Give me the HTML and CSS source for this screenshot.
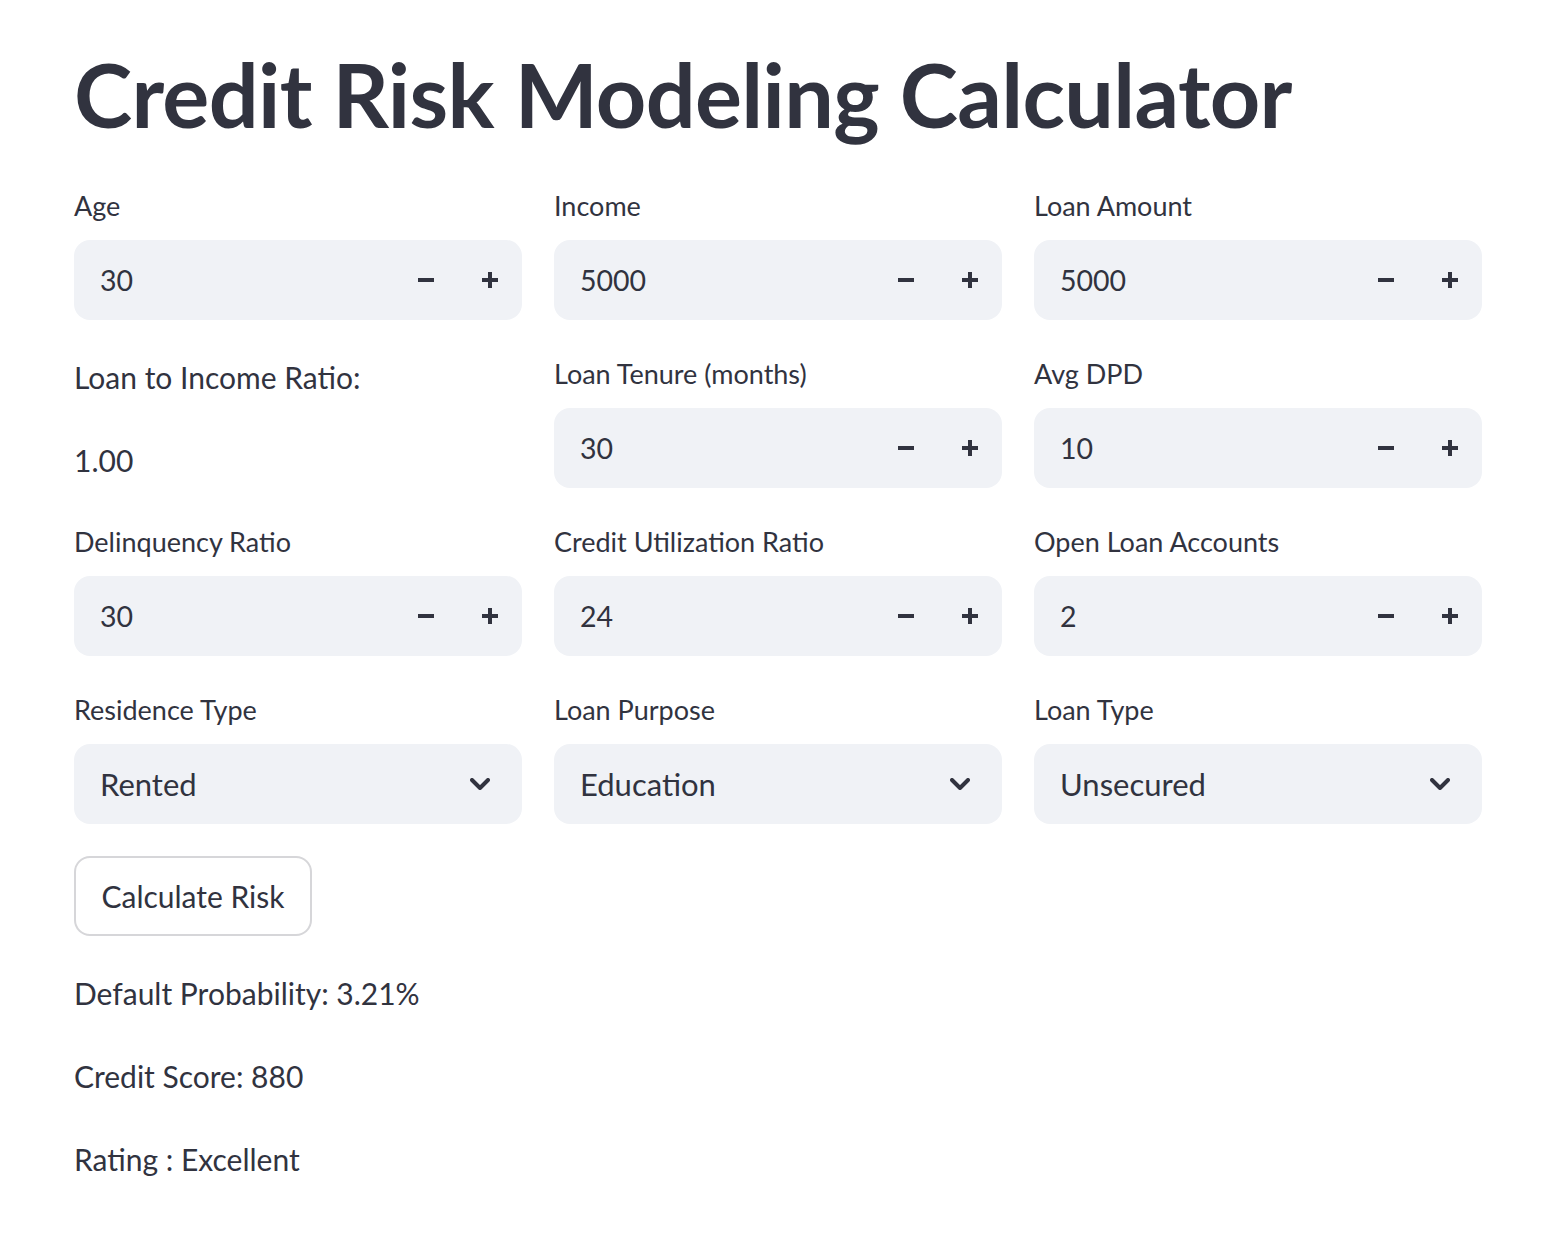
FILE: index.html
```html
<!DOCTYPE html>
<html lang="en">
<head>
<meta charset="utf-8">
<title>Credit Risk Modeling Calculator</title>
<link rel="stylesheet" href="styles.css">
</head>
<body>
<main class="main">
  <h1 class="title">Credit Risk Modeling Calculator</h1>
  <div class="grid">
    <div class="field">
      <label class="label">Age</label>
      <div class="num"><span class="val">30</span><span class="step"><svg width="16" height="16" viewBox="0 0 16 16"><rect x="0" y="6" width="16" height="4" fill="#31333F"/></svg></span><span class="step"><svg width="16" height="16" viewBox="0 0 16 16"><rect x="0" y="6" width="16" height="4" fill="#31333F"/><rect x="6" y="0" width="4" height="16" fill="#31333F"/></svg></span></div>
    </div>
    <div class="field">
      <label class="label">Income</label>
      <div class="num"><span class="val">5000</span><span class="step"><svg width="16" height="16" viewBox="0 0 16 16"><rect x="0" y="6" width="16" height="4" fill="#31333F"/></svg></span><span class="step"><svg width="16" height="16" viewBox="0 0 16 16"><rect x="0" y="6" width="16" height="4" fill="#31333F"/><rect x="6" y="0" width="4" height="16" fill="#31333F"/></svg></span></div>
    </div>
    <div class="field">
      <label class="label">Loan Amount</label>
      <div class="num"><span class="val">5000</span><span class="step"><svg width="16" height="16" viewBox="0 0 16 16"><rect x="0" y="6" width="16" height="4" fill="#31333F"/></svg></span><span class="step"><svg width="16" height="16" viewBox="0 0 16 16"><rect x="0" y="6" width="16" height="4" fill="#31333F"/><rect x="6" y="0" width="4" height="16" fill="#31333F"/></svg></span></div>
    </div>

    <div class="field">
      <p class="text">Loan to Income Ratio:</p>
      <p class="text">1.00</p>
    </div>
    <div class="field">
      <label class="label">Loan Tenure (months)</label>
      <div class="num"><span class="val">30</span><span class="step"><svg width="16" height="16" viewBox="0 0 16 16"><rect x="0" y="6" width="16" height="4" fill="#31333F"/></svg></span><span class="step"><svg width="16" height="16" viewBox="0 0 16 16"><rect x="0" y="6" width="16" height="4" fill="#31333F"/><rect x="6" y="0" width="4" height="16" fill="#31333F"/></svg></span></div>
    </div>
    <div class="field">
      <label class="label">Avg DPD</label>
      <div class="num"><span class="val">10</span><span class="step"><svg width="16" height="16" viewBox="0 0 16 16"><rect x="0" y="6" width="16" height="4" fill="#31333F"/></svg></span><span class="step"><svg width="16" height="16" viewBox="0 0 16 16"><rect x="0" y="6" width="16" height="4" fill="#31333F"/><rect x="6" y="0" width="4" height="16" fill="#31333F"/></svg></span></div>
    </div>

    <div class="field">
      <label class="label">Delinquency Ratio</label>
      <div class="num"><span class="val">30</span><span class="step"><svg width="16" height="16" viewBox="0 0 16 16"><rect x="0" y="6" width="16" height="4" fill="#31333F"/></svg></span><span class="step"><svg width="16" height="16" viewBox="0 0 16 16"><rect x="0" y="6" width="16" height="4" fill="#31333F"/><rect x="6" y="0" width="4" height="16" fill="#31333F"/></svg></span></div>
    </div>
    <div class="field">
      <label class="label">Credit Utilization Ratio</label>
      <div class="num"><span class="val">24</span><span class="step"><svg width="16" height="16" viewBox="0 0 16 16"><rect x="0" y="6" width="16" height="4" fill="#31333F"/></svg></span><span class="step"><svg width="16" height="16" viewBox="0 0 16 16"><rect x="0" y="6" width="16" height="4" fill="#31333F"/><rect x="6" y="0" width="4" height="16" fill="#31333F"/></svg></span></div>
    </div>
    <div class="field">
      <label class="label">Open Loan Accounts</label>
      <div class="num"><span class="val">2</span><span class="step"><svg width="16" height="16" viewBox="0 0 16 16"><rect x="0" y="6" width="16" height="4" fill="#31333F"/></svg></span><span class="step"><svg width="16" height="16" viewBox="0 0 16 16"><rect x="0" y="6" width="16" height="4" fill="#31333F"/><rect x="6" y="0" width="4" height="16" fill="#31333F"/></svg></span></div>
    </div>

    <div class="field">
      <label class="label">Residence Type</label>
      <div class="select"><span class="sval">Rented</span><svg class="chev" width="20" height="12" viewBox="0 0 20 12"><path d="M2 2 L10 10 L18 2" fill="none" stroke="#31333F" stroke-width="4" stroke-linecap="round" stroke-linejoin="round"/></svg></div>
    </div>
    <div class="field">
      <label class="label">Loan Purpose</label>
      <div class="select"><span class="sval">Education</span><svg class="chev" width="20" height="12" viewBox="0 0 20 12"><path d="M2 2 L10 10 L18 2" fill="none" stroke="#31333F" stroke-width="4" stroke-linecap="round" stroke-linejoin="round"/></svg></div>
    </div>
    <div class="field">
      <label class="label">Loan Type</label>
      <div class="select"><span class="sval">Unsecured</span><svg class="chev" width="20" height="12" viewBox="0 0 20 12"><path d="M2 2 L10 10 L18 2" fill="none" stroke="#31333F" stroke-width="4" stroke-linecap="round" stroke-linejoin="round"/></svg></div>
    </div>
  </div>

  <button class="btn" type="button">Calculate Risk</button>

  <div class="results">
    <p class="text">Default Probability: 3.21%</p>
    <p class="text">Credit Score: 880</p>
    <p class="text">Rating : Excellent</p>
  </div>
</main>
</body>
</html>
```

FILE: styles.css
```css
* { box-sizing: border-box; }

body {
  margin: 0;
  background: #ffffff;
  color: #31333F;
  font-family: Lato, "Open Sans", sans-serif;
}

.main {
  width: 1556px;
  padding: 0 74px;
}

.title {
  margin: 41px 0 41px;
  font-size: 88px;
  font-weight: 700;
  line-height: 106px;
  letter-spacing: -0.65px;
  white-space: nowrap;
}

.grid {
  display: grid;
  grid-template-columns: repeat(3, 448px);
  column-gap: 32px;
  row-gap: 36px;
}

.field {
  display: flex;
  flex-direction: column;
}

.label {
  display: block;
  height: 44px;
  line-height: 36px;
  margin-bottom: 8px;
  font-size: 27px;
}

.num, .select {
  height: 80px;
  background: #F0F2F6;
  border-radius: 16px;
  display: flex;
  align-items: center;
}

.val {
  flex: 1;
  padding-left: 26px;
  font-size: 28.5px;
}

.step {
  width: 64px;
  height: 80px;
  display: flex;
  align-items: center;
  justify-content: center;
}

.sval {
  flex: 1;
  padding-left: 26px;
  font-size: 31px;
}

.chev {
  margin-right: 32px;
}

.text {
  margin: 0 0 32px;
  font-size: 30px;
  line-height: 51.2px;
}

.field .text:first-child {
  margin-top: -4px;
}

.field .text:last-child {
  margin-bottom: 0;
}

.btn {
  display: block;
  margin-top: 32px;
  height: 80px;
  width: 238px;
  padding: 0;
  background: #ffffff;
  border: 2px solid rgba(49, 51, 63, 0.2);
  border-radius: 16px;
  font-family: inherit;
  font-size: 30px;
  color: #31333F;
  white-space: nowrap;
  text-align: center;
}

.results {
  margin-top: 32px;
}
```
